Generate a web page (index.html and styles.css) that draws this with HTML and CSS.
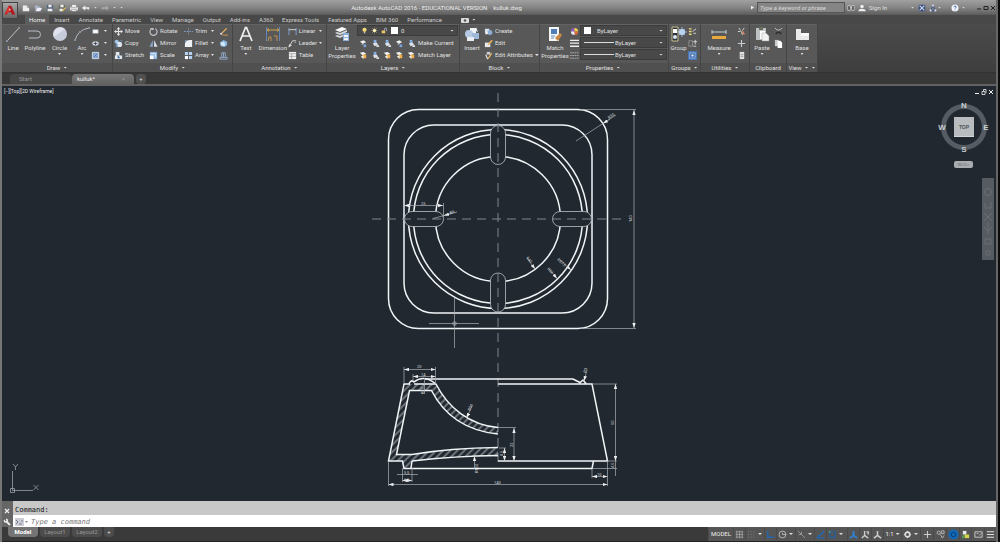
FILE: index.html
```html
<!DOCTYPE html>
<html lang="en">
<head>
<meta charset="utf-8">
<title>Autodesk AutoCAD 2016 - kulluk.dwg</title>
<link rel="stylesheet" href="styles.css">
</head>
<body>
<svg class="defs" aria-hidden="true">
  <symbol id="new" viewBox="0 0 10 10"><path d="M1 2h5l3 3v4H1z" fill="#eee"/><path d="M6 2v3h3" fill="#aaa"/></symbol>
  <symbol id="open" viewBox="0 0 10 10"><path d="M1 2h4l1 1h2v2H4L2 9z" fill="#aab4c4"/><path d="M4 5h6L8 9H2z" fill="#eef"/></symbol>
  <symbol id="save" viewBox="0 0 10 10"><path d="M1 1h8v8H1z" fill="#56657c"/><path d="M3 1h4v3H3zM2 6h6v3H2z" fill="#eee"/></symbol>
  <symbol id="saveas" viewBox="0 0 10 10"><path d="M1 1h8v8H1z" fill="#6b6f65"/><path d="M3 1h4v3H3zM2 6h4v3H2z" fill="#eee"/><path d="M5 8l4-4 1 1-4 4z" fill="#e6c860"/></symbol>
  <symbol id="print" viewBox="0 0 10 10"><path d="M0 4h10v4H0z" fill="#ddd"/><path d="M2 1h6v3H2zM2 7h6v2H2z" fill="#fff" stroke="#666" stroke-width=".5"/></symbol>
  <symbol id="undo" viewBox="0 0 10 10"><path d="M0 5l4-3v2h5v3H7V6H4v2z" fill="#eee"/></symbol>
  <symbol id="redo" viewBox="0 0 10 10"><path d="M10 5L6 2v2H1v3h2V6h3v2z" fill="#aaa"/></symbol>
  <symbol id="rect" viewBox="0 0 10 10"><path d="M2 3h6v4H2z" fill="#fff" stroke="#9ab" stroke-width=".7"/></symbol>
  <symbol id="ellipse" viewBox="0 0 10 10"><ellipse cx="5" cy="5" rx="3.6" ry="2.4" fill="#ccd4e2"/><path d="M5 3v4M3 5h4" stroke="#333" stroke-width=".8"/></symbol>
  <symbol id="hatch" viewBox="0 0 10 10"><path d="M1.500 1.500h7v7h-7z" fill="#8eaedd" stroke="#d8e2f0"/><path d="M3 7l4-4M3 4l1-1M6 7l1-1" stroke="#35506f" stroke-width=".7"/></symbol>
  <symbol id="move" viewBox="0 0 10 10"><path d="M5 0l2 2.500H5.600v1.900H7.500V3L10 5 7.500 7V5.600H5.600v1.900H7L5 10 3 7.500h1.400V5.600H2.500V7L0 5l2.500-2v1.400h1.900V2.500H3z" fill="#e4e6ea"/></symbol>
  <symbol id="copy" viewBox="0 0 10 10"><circle cx="3" cy="3" r="2.300" fill="#9ec3e6"/><circle cx="6" cy="6" r="3" fill="#dde6f0"/><path d="M2 7l2-1-1 3zM7 1l2 2" stroke="#6e9bd0" fill="none"/></symbol>
  <symbol id="stretch" viewBox="0 0 10 10"><path d="M2 1h4v4h3v4H1V5h1z" fill="#e2e8ee"/><path d="M4 4l3 4H4z" fill="#3b6ea4"/></symbol>
  <symbol id="rotate" viewBox="0 0 10 10"><path d="M3 1.800A4 4 0 1 0 7 1.800" fill="none" stroke="#c9ced6" stroke-width="1.200"/><path d="M1 1h4v3z" fill="#c9ced6"/></symbol>
  <symbol id="mirror" viewBox="0 0 10 10"><path d="M4.300 1v7.500H.500z" fill="#8aa6cc"/><path d="M5.700 1v7.500h3.800z" fill="#dce3ec"/></symbol>
  <symbol id="scale" viewBox="0 0 10 10"><path d="M1 1h8v8H1z" fill="#8db5df"/><path d="M1 5h4v4H1z" fill="#fff"/><path d="M2 3h5v4" fill="none" stroke="#fff" stroke-width=".8"/></symbol>
  <symbol id="trim" viewBox="0 0 10 10"><path d="M0 5h10" stroke="#7fa0d0" stroke-dasharray="2 1"/><path d="M5 1v8" stroke="#777f8c"/></symbol>
  <symbol id="fillet" viewBox="0 0 10 10"><path d="M1 9V6q0-5 6-5h2v8z" fill="#edf1f5"/><path d="M1 1h3L1 4z" fill="#7892b8"/></symbol>
  <symbol id="array" viewBox="0 0 10 10"><path d="M1 1h3.500v3.500H1zM5.500 1H9v3.500H5.500zM5.500 5.500H9V9H5.500z" fill="#b4d0f2"/><path d="M1 5.500h3.500V9H1z" fill="#fff"/></symbol>
  <symbol id="erase" viewBox="0 0 10 10"><path d="M3 6l5-5 1 1-5 5z" fill="#f4b356"/><path d="M1 7l2-1 1 2-2 1z" fill="#ddd"/><path d="M4 9h6" stroke="#db9a40"/></symbol>
  <symbol id="explode" viewBox="0 0 10 10"><path d="M1 4l4-3 4 2v4L6 9 2 8z" fill="#87b8e6"/><path d="M2 4l3-1 2 2-1 3-4-1z" fill="#d5e5f4"/></symbol>
  <symbol id="offset" viewBox="0 0 10 10"><path d="M1 9V7h2V2h4v5h2v2zM3 7h4M5 2v5" fill="none" stroke="#94adcf"/></symbol>
  <symbol id="linear" viewBox="0 0 10 10"><path d="M1 1v8M9 1v8" stroke="#7fa2d8"/><path d="M1 3h8" stroke="#ddd"/></symbol>
  <symbol id="leader" viewBox="0 0 10 10"><path d="M1 9l4-7h4" fill="none" stroke="#ddd"/><path d="M1 9l.5-3L4 7zM7 4h2" fill="#ddd" stroke="#ddd" stroke-width=".5"/></symbol>
  <symbol id="table" viewBox="0 0 10 10"><path d="M1 1h8v8H1z" fill="#eee"/><path d="M1 3h8M1 6h8M4 3v6" stroke="#888" stroke-width=".6"/></symbol>
  <symbol id="layer" viewBox="0 0 10 10"><path d="M1 3l4-1.500 3 2L4 5z" fill="#f2f4f6"/><path d="M5 6h3v3H5z" fill="#7aa3dc"/><path d="M3 6l2-1" stroke="#eee"/></symbol>
  <symbol id="layerb" viewBox="0 0 10 10"><path d="M1 2l4-1 3 2-4 2z" fill="#f2f4f6"/><path d="M4 4h4v4H4z" fill="#f0b14c"/><path d="M2 6l3-1v4z" fill="#eee"/></symbol>
  <symbol id="layerc" viewBox="0 0 10 10"><path d="M3 1h3v4H3z" fill="#86b0e2"/><path d="M2 5l4-1 2 2-4 2zM6 7h3v2H6z" fill="#dfe3e8"/></symbol>
  <symbol id="create" viewBox="0 0 10 10"><path d="M1 2h5v5H1z" fill="#dce5ef"/><circle cx="6.500" cy="6" r="2.800" fill="#8daed5"/><path d="M1 8l3-3v3z" fill="#fff"/></symbol>
  <symbol id="edit" viewBox="0 0 10 10"><path d="M1 4h6v5H1z" fill="#e6e9ee"/><path d="M4 6l4-5 2 1-5 5z" fill="#edb35a"/></symbol>
  <symbol id="attr" viewBox="0 0 10 10"><path d="M3 1h4v3H3z" fill="#c8ccd0"/><path d="M4 8l4-6 1 1-4 6z" fill="#f0bd66"/><path d="M2 4l2 5" stroke="#eee" stroke-width="1.300"/></symbol>
  <symbol id="wheel" viewBox="0 0 10 10"><path d="M5 5L1 5A4 4 0 0 1 5 1z" fill="#9b5cc9"/><path d="M5 5V1a4 4 0 0 1 4 4z" fill="#f0d24c"/><path d="M5 5h4a4 4 0 0 1-4 4z" fill="#e2683c"/><path d="M5 5v4a4 4 0 0 1-4-4z" fill="#ecebf2"/></symbol>
  <symbol id="lines" viewBox="0 0 10 10"><path d="M0 1.500h10M0 4.500h10M0 8h10" stroke="#eee" stroke-width="1.500"/></symbol>
  <symbol id="dashes" viewBox="0 0 10 10"><path d="M0 2h10M0 5h10M0 8h10" stroke="#aaa" stroke-dasharray="2 .5"/></symbol>
  <symbol id="ungroup" viewBox="0 0 10 10"><path d="M1 2h3M1 5h3M1 8h3" stroke="#e7d577" stroke-width="1.500"/><path d="M5 5l4-3M6 7h3" stroke="#ddd"/></symbol>
  <symbol id="gedit" viewBox="0 0 10 10"><path d="M1 2h4v6H1z" fill="none" stroke="#ccc" stroke-dasharray="1 1"/><path d="M8 1v5M6 3h4M6 8h3" stroke="#ddd"/></symbol>
  <symbol id="gsel" viewBox="0 0 10 10"><path d="M0 0h10v10H0z" fill="#4975b5"/><path d="M2 2h6v6H2z" fill="none" stroke="#cfe2fb" stroke-dasharray="1 1"/><path d="M4 4h2v2H4z" fill="#fff"/></symbol>
  <symbol id="select" viewBox="0 0 10 10"><path d="M2 1l2 3M8 1L6 4M1 5h3M5 5l1 4" stroke="#ddd"/><path d="M6 3l3 5H6z" fill="#d78c66"/></symbol>
  <symbol id="point" viewBox="0 0 10 10"><path d="M5 1v8M1 5h8" stroke="#c6cbd0" stroke-width="1.300"/></symbol>
  <symbol id="calc" viewBox="0 0 10 10"><path d="M3 1h5v8H3z" fill="#e2e2e2"/><path d="M4 4h3M4 6h3" stroke="#777" stroke-width=".7"/></symbol>
  <symbol id="cut" viewBox="0 0 10 10"><path d="M1 1q4 5 8 0" fill="none" stroke="#ccc"/><path d="M2 8q3-5 6 0" fill="none" stroke="#2d2d2d" stroke-width="1.600"/></symbol>
  <symbol id="copyclip" viewBox="0 0 10 10"><path d="M1 1h4v7H1z" fill="#ccc"/><path d="M4 2h3l2 2v6H4z" fill="#fff"/></symbol>
  <symbol id="bulb" viewBox="0 0 10 10"><circle cx="5" cy="4" r="3" fill="#f5db78"/><path d="M4 7h2v2H4z" fill="#ccc"/></symbol>
  <symbol id="sun" viewBox="0 0 10 10"><path d="M5 1v8M1 5h8M2 2l6 6M8 2L2 8" stroke="#d9cf9a" stroke-width=".8"/><circle cx="5" cy="5" r="2.300" fill="#fff3bd"/></symbol>
  <symbol id="lock" viewBox="0 0 10 10"><path d="M1 5h5v4H1z" fill="#edc767"/><path d="M5 5V3q0-1.500 1.500-1.500T8 3v3" fill="none" stroke="#bcd"/></symbol>
</svg>

<div class="app">
  <header class="titlebar">
    <button class="logo" aria-label="Application menu"><svg viewBox="0 0 16 16"><path d="M2 13L7 2h3l5 11h-4l-1-3H6l-1 3z" fill="#b3141a"/><path d="M2 13L7 2l2 4-2 4z" fill="#e0302c"/><path d="M7 8h2.500L8.500 5z" fill="#ddd"/></svg></button>
    <nav class="qat" aria-label="Quick access">
      <button aria-label="New"><svg><use href="#new"/></svg></button>
      <button aria-label="Open"><svg><use href="#open"/></svg></button>
      <button aria-label="Save"><svg><use href="#save"/></svg></button>
      <button aria-label="Save as"><svg><use href="#saveas"/></svg></button>
      <button aria-label="Plot"><svg><use href="#print"/></svg></button>
      <button aria-label="Undo"><svg><use href="#undo"/></svg></button>
      <i class="caret"></i>
      <button aria-label="Redo"><svg><use href="#redo"/></svg></button>
      <i class="caret"></i>
      <i class="caret"></i>
    </nav>
    <h1>Autodesk AutoCAD 2016 - EDUCATIONAL VERSION &nbsp;&nbsp; kulluk.dwg</h1>
    <div class="info">
      <i class="play"></i>
      <input type="text" class="search" placeholder="Type a keyword or phrase" aria-label="Search">
      <button class="i12" aria-label="Find"><svg viewBox="0 0 10 10"><path d="M1 2h3v6H1zM6 2h3v6H6zM4 4h2" fill="#444" stroke="#eee" stroke-width=".8"/></svg></button>
      <button class="signin"><svg viewBox="0 0 10 10"><circle cx="5" cy="3" r="2.200" fill="#eee"/><path d="M0 9q1-3 5-3t5 3z" fill="#eee"/></svg><span>Sign In</span></button>
      <i class="caret"></i>
      <button class="i12 exchange" aria-label="Exchange"><svg viewBox="0 0 10 10"><path d="M1 1h8v8H1z" fill="#384a78"/><path d="M2 2l6 6M8 2L2 8" stroke="#c7d3ee" stroke-width="1.500"/></svg></button>
      <button class="i12" aria-label="A360"><svg viewBox="0 0 10 10"><path d="M5 2l3 6H2z" fill="none" stroke="#44598b" stroke-width="1.300"/><circle cx="5" cy="2" r="1.300" fill="#dde"/><circle cx="2" cy="8" r="1.300" fill="#dde"/><circle cx="8" cy="8" r="1.300" fill="#dde"/></svg></button>
      <i class="caret"></i>
      <button class="i12 help" aria-label="Help"><svg viewBox="0 0 10 10"><circle cx="5" cy="5" r="4.400" fill="#f2f5fa"/><path d="M3.600 4q0-1.500 1.500-1.500T6.500 4Q6 5 5 5.500V6M5 7v1" fill="none" stroke="#2b5ca0"/></svg></button>
      <i class="caret"></i>
      <span class="win"><button aria-label="Minimize"><svg viewBox="0 0 6 6"><path d="M1 4h4" stroke="#222"/></svg></button><button aria-label="Restore"><svg viewBox="0 0 6 6"><path d="M1 1.500h4v3H1z" fill="none" stroke="#222"/></svg></button><button aria-label="Close"><svg viewBox="0 0 6 6"><path d="M1 1l4 4M5 1L1 5" stroke="#222"/></svg></button></span>
    </div>
  </header>

  <nav class="tabs" aria-label="Ribbon tabs">
    <button class="on">Home</button><button>Insert</button><button>Annotate</button><button>Parametric</button><button>View</button><button>Manage</button><button>Output</button><button>Add-ins</button><button>A360</button><button>Express Tools</button><button>Featured Apps</button><button>BIM 360</button><button>Performance</button>
    <button class="camera" aria-label="Ribbon display"><svg viewBox="0 0 8 6"><rect y="1" width="8" height="5" rx="1" fill="#ddd"/><circle cx="4" cy="3.500" r="1.300" fill="#555"/></svg><i class="caret"></i></button>
  </nav>

  <main class="ribbon">
    <section class="panel draw">
      <div class="body">
        <button class="big"><svg viewBox="0 0 16 16"><path d="M2 15L14 2" stroke="#bfc5cb"/><path d="M1 14h2v2H1zM13 1h2v2h-2z" fill="#8a9098"/></svg>Line</button>
        <button class="big"><svg viewBox="0 0 16 16"><path d="M2 5h8a3.500 3.500 0 0 1 0 7H2" fill="none" stroke="#b5bbc3"/><path d="M1 4h2v2H1z" fill="#8a9098"/></svg>Polyline</button>
        <button class="big circle"><svg viewBox="0 0 16 16"><circle cx="8" cy="8" r="7" fill="#c7ccda"/><path d="M2 11A7 7 0 0 1 13 3z" fill="#dfe2ec"/></svg>Circle<i class="caret"></i></button>
        <button class="big arc"><svg viewBox="0 0 16 16"><path d="M1 15Q3 4 15 2" fill="none" stroke="#b5bbc3"/><path d="M0 13h2v2H0zM5 5h2v2H5zM14 1h2v2h-2z" fill="#8a9098"/></svg>Arc<i class="caret"></i></button>
        <div class="rows"><button aria-label="Rectangle"><svg><use href="#rect"/></svg><i class="caret"></i></button><button aria-label="Ellipse"><svg><use href="#ellipse"/></svg><i class="caret"></i></button><button aria-label="Hatch"><svg><use href="#hatch"/></svg><i class="caret"></i></button></div>
      </div>
      <h2>Draw<i class="caret"></i></h2>
    </section>
    <section class="panel modify">
      <div class="body">
        <div class="rows"><button><svg><use href="#move"/></svg>Move</button><button><svg><use href="#copy"/></svg>Copy</button><button><svg><use href="#stretch"/></svg>Stretch</button></div>
        <div class="rows"><button><svg><use href="#rotate"/></svg>Rotate</button><button><svg><use href="#mirror"/></svg>Mirror</button><button><svg><use href="#scale"/></svg>Scale</button></div>
        <div class="rows spread"><button><svg><use href="#trim"/></svg>Trim<i class="caret"></i></button><button><svg><use href="#fillet"/></svg>Fillet<i class="caret"></i></button><button><svg><use href="#array"/></svg>Array<i class="caret"></i></button></div>
        <div class="rows"><button aria-label="Erase"><svg><use href="#erase"/></svg></button><button aria-label="Explode"><svg><use href="#explode"/></svg></button><button aria-label="Offset"><svg><use href="#offset"/></svg></button></div>
      </div>
      <h2>Modify<i class="caret"></i></h2>
    </section>
    <section class="panel annotation">
      <div class="body">
        <button class="big"><svg viewBox="0 0 16 16"><path d="M2 15L7.500 1.500h1L14 15M4.200 10h7.600" fill="none" stroke="#f2f2f2" stroke-width="1.700"/></svg>Text<i class="caret"></i></button>
        <button class="big"><svg viewBox="0 0 16 16"><path d="M1.500 1v14M14.500 1v14" stroke="#6485b8"/><path d="M2 4h12M4 2.500L2 4l2 1.500M12 2.500L14 4l-2 1.500" fill="none" stroke="#d3a349"/><path d="M3 15l1-4h2v4M9 10h3v5" fill="none" stroke="#c2914d"/></svg>Dimension</button>
        <div class="rows spread"><button><svg><use href="#linear"/></svg>Linear<i class="caret"></i></button><button><svg><use href="#leader"/></svg>Leader<i class="caret"></i></button><button><svg><use href="#table"/></svg>Table</button></div>
      </div>
      <h2>Annotation<i class="caret"></i></h2>
    </section>
    <section class="panel layers">
      <div class="body">
        <button class="big"><svg viewBox="0 0 16 16"><path d="M1 4l7-3 5 2-7 3z" fill="#fff"/><path d="M1 7l2-1 3 1 7-3v2L6 9zM1 10l2-1 3 1 4-2v2l-4 2z" fill="#d5d9de"/><path d="M9 7h6v8H9z" fill="#8fb0dc"/><path d="M10 9h4v2h-4zM10 12h4v2h-4z" fill="#f0f4f8"/></svg>Layer<br>Properties</button>
        <div class="stack">
          <div class="combo"><svg><use href="#bulb"/></svg><svg><use href="#sun"/></svg><svg><use href="#lock"/></svg><i class="swatch"></i><select aria-label="Layer"><option>0</option></select><i class="caret"></i></div>
          <div class="line"><button aria-label="Off"><svg><use href="#layer"/></svg></button><button aria-label="Isolate"><svg><use href="#layerc"/></svg></button><button aria-label="Freeze"><svg><use href="#layerc"/></svg></button><button aria-label="Lock"><svg><use href="#layer"/></svg></button><button class="wide"><svg><use href="#layerc"/></svg>Make Current</button></div>
          <div class="line"><button aria-label="Turn on"><svg><use href="#layerb"/></svg></button><button aria-label="Unisolate"><svg><use href="#layerc"/></svg></button><button aria-label="Thaw"><svg><use href="#layerb"/></svg></button><button aria-label="Unlock"><svg><use href="#layerb"/></svg></button><button class="wide"><svg><use href="#layerb"/></svg>Match Layer</button></div>
        </div>
      </div>
      <h2>Layers<i class="caret"></i></h2>
    </section>
    <section class="panel block">
      <div class="body">
        <button class="big"><svg viewBox="0 0 16 16"><path d="M6 2h6v5H6z" fill="#f1f3f6"/><circle cx="5" cy="8" r="4" fill="#b5c9e2"/><path d="M8 7h7v6H8z" fill="#9fb9da"/><path d="M3 11h7v4H3zM12 1l2 5-2-1z" fill="#e9eef4"/></svg>Insert</button>
        <div class="rows"><button><svg><use href="#create"/></svg>Create</button><button><svg><use href="#edit"/></svg>Edit</button><button><svg><use href="#attr"/></svg>Edit Attributes<i class="caret"></i></button></div>
      </div>
      <h2>Block<i class="caret"></i></h2>
    </section>
    <section class="panel properties">
      <div class="body">
        <button class="big"><svg viewBox="0 0 16 16"><path d="M2 1h10v14H2z" fill="#f4f6f8"/><path d="M4 3h6v5H4z" fill="#4f7db8"/><path d="M4 10h4M4 12h3" stroke="#6b8dbb"/><path d="M8 12l5-5 2 2-4 6z" fill="#c88745"/></svg>Match<br>Properties</button>
        <div class="rows"><button aria-label="Object color"><svg><use href="#wheel"/></svg></button><button aria-label="Lineweight"><svg><use href="#lines"/></svg></button><button aria-label="Linetype"><svg><use href="#dashes"/></svg></button></div>
        <div class="stack">
          <div class="combo"><i class="swatch"></i><select class="pad" aria-label="Object color"><option>ByLayer</option></select><i class="caret"></i></div>
          <div class="combo"><i class="rule"></i><select aria-label="Lineweight"><option>ByLayer</option></select><i class="caret"></i></div>
          <div class="combo"><i class="rule"></i><select aria-label="Linetype"><option>ByLayer</option></select><i class="caret"></i></div>
        </div>
      </div>
      <div class="foot"><h2>Properties<i class="caret"></i></h2><button aria-label="Properties palette"><i class="caret"></i></button></div>
    </section>
    <section class="panel groups">
      <div class="body">
        <button class="big"><svg viewBox="0 0 16 16"><path d="M1 1h6v14H1z" fill="#2e3338" stroke="#c7c093"/><path d="M2 3h4v4H2z" fill="#fff"/><circle cx="4" cy="11" r="2" fill="#d8e6f2"/><circle cx="11" cy="6" r="3" fill="#cfe5fa"/><path d="M11 1v10M6 6h10M8 3l6 6M14 3L8 9" stroke="#a9cdf0" stroke-width=".8"/></svg>Group</button>
        <div class="rows"><button aria-label="Ungroup"><svg><use href="#ungroup"/></svg></button><button aria-label="Group edit"><svg><use href="#gedit"/></svg></button><button aria-label="Group selection"><svg><use href="#gsel"/></svg></button></div>
      </div>
      <h2>Groups<i class="caret"></i></h2>
    </section>
    <section class="panel utilities">
      <div class="body">
        <button class="big"><svg viewBox="0 0 16 16"><path d="M1 6h14M1 4v4M15 4v4" stroke="#c3d2da"/><path d="M1 10h14v3H1z" fill="#e8a93b"/></svg>Measure<i class="caret"></i></button>
        <div class="rows"><button aria-label="Select"><svg><use href="#select"/></svg></button><button aria-label="Point"><svg><use href="#point"/></svg></button><button aria-label="Calculator"><svg><use href="#calc"/></svg></button></div>
      </div>
      <h2>Utilities<i class="caret"></i></h2>
    </section>
    <section class="panel clipboard">
      <div class="body">
        <button class="big"><svg viewBox="0 0 16 16"><path d="M2 2h10v12H2z" fill="#bfc2c5"/><path d="M5 1h4v3H5z" fill="#666d5c"/><path d="M6 5h5v8H6z" fill="#fff"/><path d="M8 7h4l3 3v5H8z" fill="#f2f2f2" stroke="#999" stroke-width=".5"/></svg>Paste<i class="caret"></i></button>
        <div class="rows"><button aria-label="Cut"><svg><use href="#cut"/></svg></button><button aria-label="Copy clip"><svg><use href="#copyclip"/></svg></button></div>
      </div>
      <h2>Clipboard</h2>
    </section>
    <section class="panel view">
      <div class="body">
        <button class="big"><svg viewBox="0 0 16 16"><path d="M2 3h5v4h8v7H2z" fill="#e9e9e9"/><path d="M7 7h8v3H7z" fill="#fafafa"/></svg>Base<i class="caret"></i></button>
      </div>
      <h2>View<i class="caret"></i><i class="caret"></i></h2>
    </section>
  </main>

  <nav class="files" aria-label="Open drawings">
    <button class="file">Start</button>
    <button class="file on">kulluk*<span>×</span></button>
    <button class="plus" aria-label="New drawing">+</button>
  </nav>

  <section class="canvas">
    <svg class="drawing" viewBox="2 86 994 415" role="img" aria-label="Plan and section of an ashtray">
      <defs>
        <pattern id="hat" width="5" height="5" patternUnits="userSpaceOnUse" patternTransform="rotate(45)"><path d="M2 0v5" stroke="#c5cbd0" stroke-width=".9"/></pattern>
        <marker id="ar" viewBox="0 0 6 4" refX="6" refY="2" markerWidth="5" markerHeight="3.500" orient="auto-start-reverse" markerUnits="userSpaceOnUse"><path d="M0 0l6 2-6 2z" fill="#eee"/></marker>
      </defs>
      <g class="bold">
        <rect x="388.500" y="109.500" width="219" height="219" rx="30"/>
        <rect x="404" y="125" width="188" height="188" rx="30"/>
        <circle cx="498" cy="219" r="89.500"/><circle cx="498" cy="219" r="84.500"/><circle cx="498" cy="219" r="62.500"/>
      </g>
      <g class="slot">
        <rect x="490.500" y="125.500" width="15" height="39" rx="7.500"/><rect x="490.500" y="273" width="15" height="39" rx="7.500"/>
        <rect x="404.500" y="211.500" width="39" height="15" rx="7.500"/><rect x="552.500" y="211.500" width="39" height="15" rx="7.500"/>
      </g>
      <path class="axis" d="M372 219H624M498 93V468"/>
      <g class="thin">
        <path d="M580 109.500H636M580 328.500H636"/><path class="dim" d="M634 110V328"/>
        <path d="M576 141L616 115"/><path class="head" d="M610 119L603 123.500"/>
        <path d="M404 203V212M443.500 203V217"/><path class="dim" d="M404 205.500H443"/>
        <path d="M433 218.500L457 212"/><path class="head" d="M453 213L444 215.500"/>
        <path class="head" d="M527 258L535 269"/><path class="head" d="M549 269L557 278.500"/><path class="head" d="M560 260L571 270"/>
        <path d="M429 323.500H479M454.500 298V348M453 322h3v3h-3z"/>
      </g>
      <path fill="url(#hat)" d="M404 384H436C448 408 470 425 498 427.500V434C468 431 445 417 431.500 390.500H409.500L396.500 454.500H412Q450 448 498 447.500V455.500Q455 456 412 461L411 468H404L402.500 461H388.500z"/>
      <g class="bold">
        <path d="M410 384H404L388.500 461H402.500L404 468.500H592L593.500 461M412 461L411 468"/>
        <path d="M409 384q2-5 5-2 10-8 22 2C448 408 470 425 498 427.500M498 434C468 431 445 417 431.500 390.500H409.500L396.500 454.500H412Q450 448 498 447.500M498 455.500Q455 456 412 461"/>
        <path d="M425 379H573L580 382.500 583 380 586 383.500M498 384H592L607.500 461H498M414 384H436"/>
      </g>
      <g class="thin">
        <path d="M404 367V383M435.500 367V384M413 374V381"/><path class="dim" d="M404 369.500H435.500"/><path class="dim" d="M413 376.500H435.500"/><path d="M424.500 378V394"/>
        <path class="head" d="M472 406L466.500 418"/><path class="head" d="M474.500 469V456"/>
        <path d="M498 427.500H516M499 448H506"/><path class="dim" d="M514 428V461"/><path class="dim" d="M504.500 448V461"/>
        <path d="M402.500 468V482M412 468V482M397 474.500H418"/><path class="dim" d="M402.500 480.500H412"/>
        <path d="M388.500 461V486M607.500 461V486"/><path class="dim" d="M388.500 484.500H607.500"/>
        <path d="M592 384H617M607 461H617M593 468.500H617"/><path class="dim" d="M615.500 384V461"/><path d="M615.500 461V476"/>
        <path d="M592 469V478"/><path class="dim" d="M592 476.500H607.500"/><path class="head" d="M587 370L584 381"/>
        <path d="M12.500 471V490.500H33M10.500 488.500h4v4h-4z"/>
        <path d="M13 464l2.500 3V470M18 464l-2.500 3M33.500 485l5 5M38.500 485l-5 5"/>
      </g>
      <g class="note">
        <text x="632" y="222" transform="rotate(-90 632 222)">140</text><text x="609" y="119" transform="rotate(-33 609 119)">R30</text>
        <text x="421" y="205">25</text><text x="450" y="214" transform="rotate(-15 450 214)">R5</text>
        <text x="526" y="258" transform="rotate(50 526 258)">R40</text><text x="547" y="269" transform="rotate(50 547 269)">R54</text><text x="557" y="260" transform="rotate(42 557 260)">R57,5</text>
        <text x="417" y="368">20</text><text x="421" y="376">14</text><text x="424" y="394" transform="rotate(-90 424 394)">R15</text>
        <text x="470" y="411" transform="rotate(-63 470 411)">R50</text><text x="478" y="473" transform="rotate(-90 478 473)">R150</text>
        <text x="513" y="447" transform="rotate(-90 513 447)">22</text><text x="503" y="456" transform="rotate(-90 503 456)">8,5</text><text x="498" y="457" transform="rotate(-90 498 457)">5</text>
        <text x="404" y="474">5,5</text><text x="404" y="481">6,5</text><text x="494" y="484">140</text><text x="597" y="476">10</text>
        <text x="614" y="425" transform="rotate(-90 614 425)">50</text><text x="614" y="468" transform="rotate(-90 614 468)">4,5</text><text x="586" y="373" transform="rotate(-75 586 373)">R3</text>
      </g>
    </svg>
    <p class="viewlabel">[−][Top][2D Wireframe]</p>
    <div class="overlay">
      <span class="win light"><button aria-label="Minimize view"><svg viewBox="0 0 6 6"><path d="M1 4.500h4" stroke="#eee"/></svg></button><button aria-label="Restore view"><svg viewBox="0 0 6 6"><path d="M1 2.500h3v3H1zM2.500 2V.500H5V4" fill="none" stroke="#eee" stroke-width=".8"/></svg></button><button aria-label="Close view"><svg viewBox="0 0 6 6"><path d="M1 1l4 4M5 1L1 5" stroke="#eee"/></svg></button></span>
      <svg class="cube" viewBox="0 0 54 54" role="img" aria-label="View cube"><circle cx="27" cy="27" r="20.500" fill="none" stroke="#555c63" stroke-width="5"/><path d="M17 17h20v20H17z" fill="#b9bcbe"/><path d="M17 36h20v1H17z" fill="#d4d6d8"/><text x="27" y="29" class="top">TOP</text><text x="27" y="8">N</text><text x="27" y="52">S</text><text x="5" y="30">W</text><text x="49" y="30">E</text></svg>
      <button class="wcs">WCS ▿</button>
      <div class="navbar"><svg viewBox="0 0 12 82" fill="none" stroke="#686f76"><circle cx="6" cy="14" r="3.500"/><path d="M3 25v5h6v-6M2 35l8 8M10 35l-8 8M2 49l4 4 4-4M6 44v12M3 61h6v5H3zM4 73h4v4H4z"/></svg></div>
    </div>
  </section>

  <section class="command">
    <div class="grip"><button aria-label="Close command line"><svg viewBox="0 0 8 8"><path d="M2 2l4 4M6 2L2 6" stroke="#eee" stroke-width="1.300"/></svg></button><button aria-label="Customize"><svg viewBox="0 0 8 8"><path d="M3 3l4 4" stroke="#eee" stroke-width="1.800"/><path d="M1 2l1 2 2-.5L4.500 2 3 1" fill="none" stroke="#eee" stroke-width="1.300"/></svg></button></div>
    <div class="lines">
      <label for="cmd">Command:</label>
      <div class="entry"><svg viewBox="0 0 14 8"><path d="M0 0h9v8H0z" fill="#cdced6"/><path d="M1 2l2 2-2 2M4 6h3M7 2v2" fill="none" stroke="#777e8c"/><path d="M10 3h3l-1.500 2z" fill="#888"/></svg><input id="cmd" type="text" placeholder="Type a command"></div>
    </div>
  </section>

  <footer class="status">
    <nav class="layouts" aria-label="Layouts"><button class="on">Model</button><button>Layout1</button><button>Layout2</button><button class="add" aria-label="New layout">+</button></nav>
    <div class="toggles">
      <button class="model">MODEL</button>
      <button aria-label="Grid"><svg viewBox="0 0 10 10"><path d="M2 1v8M5 1v8M8 1v8M1 2h8M1 5h8M1 8h8" stroke="#aaa" stroke-width=".8"/></svg></button>
      <button aria-label="Snap"><svg viewBox="0 0 10 10"><path d="M1 2h8M1 5h8M1 8h8" stroke="#888" stroke-dasharray="1 2"/></svg></button><i class="caret"></i>
      <button aria-label="Ortho"><svg viewBox="0 0 10 10"><path d="M2 1v7h7" fill="none" stroke="#2367b0" stroke-width="1.600"/></svg></button>
      <button aria-label="Polar"><svg viewBox="0 0 10 10"><circle cx="5" cy="5" r="3.800" fill="none" stroke="#bbb"/><path d="M5 5h4M5 5V3" stroke="#bbb"/></svg></button><i class="caret"></i>
      <button aria-label="Isodraft"><svg viewBox="0 0 10 10"><path d="M1 1l8 8M5 5V2M5 5H2" stroke="#999"/></svg></button><i class="caret"></i>
      <button aria-label="Snap tracking"><svg viewBox="0 0 10 10"><path d="M1 9l8-8M2 9h7" stroke="#1f66b4" stroke-width="1.600"/></svg></button>
      <button aria-label="Object snap"><svg viewBox="0 0 10 10"><path d="M2 2h6v6H2z" fill="none" stroke="#245f9a" stroke-width="1.500"/><path d="M1 1h2v2H1z" fill="#4b9a86"/></svg></button><i class="caret"></i>
      <span class="gap"></span>
      <button aria-label="Annotation visibility"><svg viewBox="0 0 10 10"><path d="M5 1v5L1 9M5 6l4 3" fill="none" stroke="#2f83dc" stroke-width="2"/></svg></button>
      <button aria-label="Autoscale"><svg viewBox="0 0 10 10"><path d="M4 1v5L1 9M4 6l4 3M6 2h2v3" fill="none" stroke="#ccc" stroke-width="1.500"/></svg></button>
      <button aria-label="Annotation scale"><svg viewBox="0 0 10 10"><path d="M5 1v5L1 9M5 6l4 3" fill="none" stroke="#ccc" stroke-width="1.700"/></svg></button>
      <button class="ratio">1:1<i class="caret"></i></button>
      <button aria-label="Workspace"><svg viewBox="0 0 10 10"><circle cx="5" cy="5" r="2.600" fill="none" stroke="#ddd" stroke-width="1.800"/><path d="M5 1v1M5 8v1M1 5h1M8 5h1" stroke="#ddd"/></svg></button><i class="caret"></i>
      <button class="last" aria-label="Monitor"><svg viewBox="0 0 10 10"><path d="M5 1v8M1 5h8" stroke="#ccc" stroke-width="1.200"/></svg></button>
      <button class="last" aria-label="Isolate objects"><svg viewBox="0 0 10 10"><circle cx="3" cy="3" r="1.800" fill="none" stroke="#bbb"/><path d="M6 1h3v3H6zM5 5l2 4 2-3" fill="none" stroke="#bbb"/></svg></button>
      <button class="last accel" aria-label="Hardware acceleration"><svg viewBox="0 0 10 10"><circle cx="5" cy="5" r="4.600" fill="#106ab8"/><circle cx="5" cy="5" r="2" fill="none" stroke="#0b437e"/></svg></button>
      <button aria-label="Clean screen"><svg viewBox="0 0 10 10"><path d="M2 1h4v4H2z" fill="#e9e9e9"/><path d="M4 5h5v4H4z" fill="#d7d34c"/><path d="M1 6h3v3H1z" fill="#5d9650"/></svg></button>
      <button class="last" aria-label="Full screen"><svg viewBox="0 0 10 10"><path d="M1 2h8v6H1zM3 4h2M6 6l2-2" fill="none" stroke="#ccc"/></svg></button>
      <button aria-label="Customization"><svg viewBox="0 0 10 10"><path d="M1 2h8M1 5h8M1 8h8" stroke="#ddd" stroke-width="1.200"/></svg></button>
    </div>
  </footer>
</div>
</body>
</html>
```
FILE: styles.css
```css
* { box-sizing: border-box; }
body {
  margin: 0;
  background: #0c0c0c;
  font: 6px/8px Roboto, "Open Sans", sans-serif;
  color: #e0e0e0;
}
.defs { position: absolute; width: 0; height: 0; }
button, input, select { font: inherit; color: inherit; border: 0; padding: 0; margin: 0; background: none; }
h1, h2, p { margin: 0; font: inherit; }
svg { display: block; flex: none; }

.app {
  position: relative;
  display: flex;
  flex-direction: column;
  min-height: 100vh;
  margin-right: 2px;
  border-left: 2px solid #777;
  border-right: 2px solid #666;
  background: #3b3b3b;
}
.caret {
  flex: none;
  width: 4px;
  height: 2px;
  background: #ddd;
  clip-path: polygon(0 0, 100% 0, 50% 100%);
}

/* title bar */
.titlebar {
  display: flex;
  align-items: center;
  height: 15px;
  background: linear-gradient(#a0a0a0, #858585 50%, #5b5b5b);
}
.logo {
  position: absolute;
  left: 0;
  top: 2px;
  width: 16px;
  height: 17px;
  background: linear-gradient(#a8a8a8, #686868);
  border: 1px solid #444;
}
.logo svg { width: 13px; height: 15px; }
.qat { display: flex; align-items: center; gap: 4px; padding-left: 20px; width: 120px; }
.qat svg { width: 8px; height: 8px; }
.qat .caret { width: 3px; }
.titlebar h1 { flex: 1; text-align: center; color: #eee; white-space: nowrap; }
.info { display: flex; align-items: center; width: 245px; }
.play { width: 3px; height: 4px; margin-right: 3px; background: #eee; clip-path: polygon(0 0, 100% 50%, 0 100%); }
.search { width: 88px; height: 11px; padding: 0 2px; background: #858585; border: 1px solid #555; font-style: italic; }
.search::placeholder { color: #ddd; opacity: 1; }
.info .i12 { width: 11px; display: flex; justify-content: center; }
.info svg { width: 8px; height: 8px; }
.signin { display: flex; align-items: center; gap: 3px; width: 55px; padding-left: 2px; }
.info .exchange { margin-left: 2px; }
.info .help { margin-left: 8px; margin-right: 2px; }
.info .caret { width: 3px; }
.win { display: flex; gap: 1px; margin-left: auto; }
.win svg, .info .win svg { width: 6px; height: 6px; }

/* ribbon tabs */
.tabs { display: flex; height: 9px; padding-left: 23px; background: #484848; }
.tabs button { padding: 0 4px; margin-right: 1px; color: #ccc; white-space: nowrap; }
.tabs .on { background: #5c5c5c; color: #eee; }
.tabs .camera { display: flex; align-items: center; gap: 3px; margin-left: 10px; }
.camera svg { width: 8px; height: 6px; }

/* ribbon */
.ribbon { display: flex; height: 49px; background: linear-gradient(#4b4b4b, #3e3e3e); border-bottom: 1px solid #333; }
.panel { display: flex; flex-direction: column; background: #585858; border-right: 1px solid #454545; }
.panel h2 {
  display: flex;
  align-items: center;
  justify-content: center;
  gap: 3px;
  height: 9px;
  background: #505050;
  white-space: nowrap;
}
.foot { display: flex; align-items: center; padding-right: 2px; background: #505050; }
.foot h2 { flex: 1; }
.body { display: flex; flex: 1; border-top: 1px solid #636363; }
.big {
  display: flex;
  flex-direction: column;
  align-items: center;
  padding-top: 1px;
  width: 24px;
  white-space: nowrap;
}
.big svg { width: 16px; height: 16px; margin-bottom: 2px; }
.big .caret, .draw .rows .caret { width: 3px; }
.big .caret { margin-top: 1px; }
.rows { display: flex; flex-direction: column; }
.rows button { display: flex; align-items: center; gap: 2px; height: 12px; white-space: nowrap; }
.rows svg, .line svg { width: 9px; height: 9px; }
.spread .caret { width: 3px; margin-left: auto; }
.stack { flex: 1; padding-right: 1px; }
.combo {
  display: flex;
  align-items: center;
  gap: 3px;
  height: 11px;
  margin-bottom: 1px;
  padding: 0 3px;
  background: #484848;
  border: 1px solid #3c3c3c;
}
.combo svg { width: 7px; height: 7px; }
.combo select { flex: 1; min-width: 0; appearance: none; }
.combo .pad { padding-left: 3px; }
.swatch { width: 7px; height: 7px; background: #fff; }
.rule { width: 30px; height: 1px; margin-right: -2px; background: #ddd; }
.line { display: flex; height: 12px; }
.line button { display: flex; align-items: center; width: 12px; padding-left: 2px; white-space: nowrap; }
.line .wide { width: auto; gap: 2px; }

.draw { width: 111px; }
.draw .big { width: 22px; }
.draw .circle { width: 27px; }
.draw .arc { width: 18px; }
.draw .rows button { gap: 4px; }
.modify { width: 120px; }
.modify .rows { width: 35px; padding-left: 1px; }
.modify .rows.spread { padding-right: 4px; }
.modify .rows:last-child { width: 14px; }
.annotation { width: 94px; }
.annotation .big { width: 28px; }
.annotation .big:first-child { width: 26px; }
.annotation .rows { flex: 1; padding: 0 4px 0 1px; }
.layers { width: 133px; }
.layers .big, .properties .big { width: 30px; }
.block { width: 80px; }
.properties { width: 129px; }
.properties .rows { padding-right: 1px; }
.groups { width: 32px; }
.groups .big { width: 19px; }
.utilities { width: 49px; }
.utilities .big { width: 36px; }
.clipboard { width: 37px; }
.view { width: 31px; }
.view .big { width: 30px; }

/* drawing tabs */
.files { display: flex; align-items: flex-end; height: 13px; padding-left: 8px; border-bottom: 2px solid #626262; background: #383838; }
.file { display: flex; justify-content: space-between; width: 62px; height: 10px; padding: 1px 9px 0; text-align: left; background: #474747; color: #999; border-radius: 4px 4px 0 0; }
.file.on { background: linear-gradient(#777, #626262); color: #eee; padding-left: 5px; }
.file span { color: #999; }
.plus { width: 10px; height: 10px; margin-left: 2px; background: #505050; border-radius: 3px; color: #ddd; }

/* model space */
.canvas { position: relative; flex: 1; background: #212830; }
.drawing { width: 100%; height: auto; }
.bold { fill: none; stroke: #f2f5f7; stroke-width: 1.5; }
.slot { fill: #212830; stroke: #b8bec4; stroke-width: 0.8; }
.axis { fill: none; stroke: #7f868d; stroke-dasharray: 9 6; }
.thin { fill: none; stroke: #a9afb5; stroke-width: 0.7; }
.dim { marker-start: url(#ar); marker-end: url(#ar); }
.head { marker-end: url(#ar); }
.note { fill: #d5d9dc; font-size: 4px; }
.viewlabel { position: absolute; left: 2px; top: 1px; font-size: 5px; color: #eee; }
.overlay { position: absolute; top: 3px; right: 2px; display: flex; flex-direction: column; align-items: flex-end; }
.cube { width: 54px; height: 54px; margin: 5px 3px 0 0; }
.cube text { fill: #c8ccd0; font: bold 8px "Liberation Sans", sans-serif; text-anchor: middle; }
.cube .top { fill: #50555a; font-size: 5px; }
.wcs { width: 19px; height: 7px; margin: 7px 21px 0 0; background: #a9adb1; border-radius: 2px; color: #62676c; font-size: 4px; line-height: 7px; }
.navbar { width: 12px; margin-top: 10px; background: #555b61; border-radius: 1px; }

/* command line */
.command { display: flex; height: 26px; }
.grip { display: flex; flex-direction: column; justify-content: flex-end; gap: 2px; width: 11px; background: #666; }
.grip svg { width: 8px; height: 8px; margin: 0 1px 1px; }
.lines { flex: 1; display: flex; flex-direction: column; font: 7px/14px "DejaVu Sans Mono", monospace; background: #c8c8c8; color: #111; }
.lines label { height: 14px; padding: 2px 2px 0; }
.entry { display: flex; align-items: center; gap: 2px; flex: 1; padding-left: 2px; background: #fff; }
.entry svg { width: 14px; height: 8px; }
.entry input { flex: 1; font-style: italic; }
.entry input::placeholder { color: #777; opacity: 1; }

/* status bar */
.status { display: flex; justify-content: space-between; height: 15px; background: #3a3a3a; border-bottom: 1px solid #222; }
.layouts { display: flex; height: 10px; padding-left: 6px; }
.layouts button { width: 30px; margin-right: 2px; background: #4c4c4c; color: #999; border-radius: 0 0 4px 4px; }
.layouts .on { background: #747474; color: #fff; font-weight: bold; }
.layouts .add { width: 10px; color: #ddd; }
.toggles { display: flex; align-items: center; background: #555; }
.toggles button { display: flex; align-items: center; justify-content: center; width: 12px; height: 12px; border-left: 1px solid #4a4a4a; }
.toggles svg { width: 9px; height: 9px; }
.toggles > .caret { margin: 0 2px 0 1px; }
.toggles .model { width: 25px; color: #eee; }
.toggles .ratio { width: 18px; gap: 2px; color: #eee; }
.toggles .last { width: 13px; }
.gap { width: 2px; }
.toggles .accel svg { width: 11px; height: 11px; }
```
